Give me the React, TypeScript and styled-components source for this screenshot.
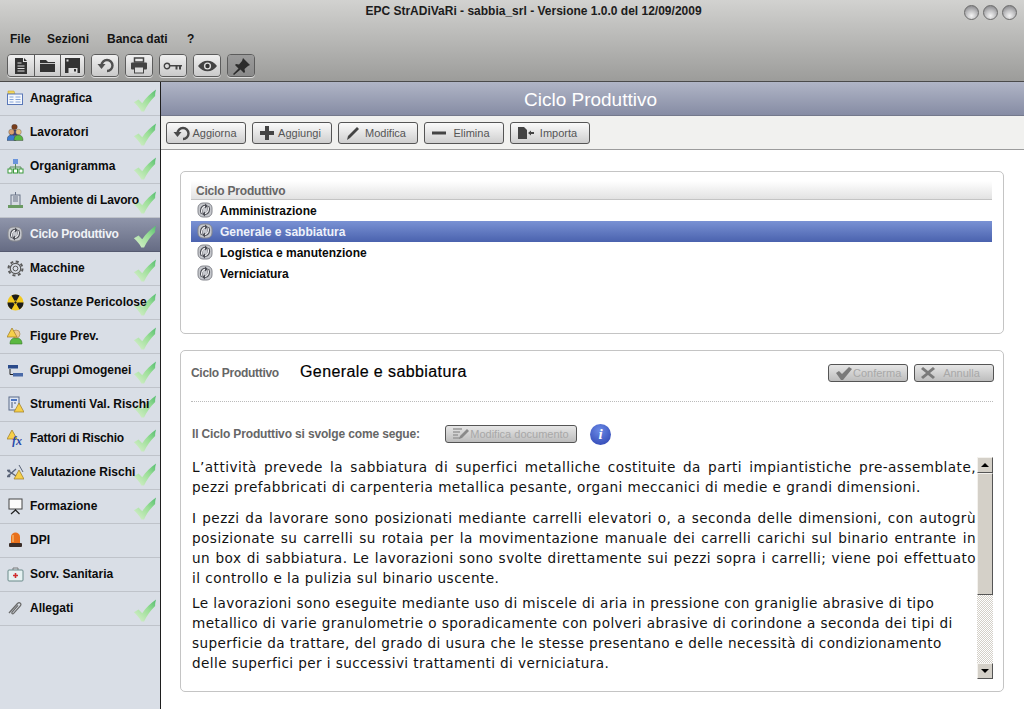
import React from "react";
import styled, { createGlobalStyle } from "styled-components";

const Global = createGlobalStyle`
  html, body {
    margin: 0;
    padding: 0;
    background: #fff;
    overflow: hidden;
  }
  * { box-sizing: border-box; }
`;

const Window = styled.div`
  width: 1024px;
  height: 709px;
  display: flex;
  flex-direction: column;
  overflow: hidden;
  font-family: "Liberation Sans", Arial, sans-serif;
`;

const TopBar = styled.header`
  height: 82px;
  flex: none;
  display: flex;
  flex-direction: column;
  background: linear-gradient(#d2d2d0, #9c9c9a);
  border-bottom: 1px solid #4a4a4a;
`;

const TitleRow = styled.div`
  height: 29px;
  flex: none;
  display: grid;
  grid-template-columns: 1fr auto;
  padding: 3px 7px 0 103px;
`;

const Title = styled.div`
  text-align: center;
  padding-top: 1px;
  font-size: 12px;
  font-weight: bold;
  line-height: 15px;
  color: #1c1c1c;
`;

const WinButtons = styled.div`
  display: flex;
  gap: 4px;
  padding-top: 2px;
`;

const WinDot = styled.span`
  width: 15px;
  height: 15px;
  border-radius: 50%;
  border: 1px solid #6b6b6b;
  background: radial-gradient(circle at 50% 75%, #f4f4f4 0, #c0c0c2 45%, #77777a 100%);
`;

const MenuBar = styled.nav`
  height: 20px;
  flex: none;
  display: grid;
  grid-template-columns: 37px 60px 80px auto;
  padding-left: 10px;
  align-items: center;
`;

const MenuItem = styled.span`
  font-size: 12px;
  font-weight: bold;
  color: #141414;
`;

const ToolRow = styled.div`
  display: flex;
  gap: 6px;
  padding: 5px 0 0 7px;
`;

const ToolGroup = styled.div`
  display: flex;
  height: 23px;
  border: 1px solid #5c5c5c;
  border-radius: 4px;
  overflow: hidden;
  box-shadow: 0 1px 0 #ddd;
`;

const ToolCell = styled.div<{ $active?: boolean; $w: number }>`
  width: ${(p) => p.$w}px;
  display: flex;
  align-items: center;
  justify-content: center;
  background: ${(p) =>
    p.$active ? "linear-gradient(#9b9b9b, #8a8a8a)" : "linear-gradient(#f0f0f0, #cacaca)"};
  & + & {
    border-left: 1px solid #5c5c5c;
  }
`;

const Body = styled.div`
  flex: 1;
  min-height: 0;
  display: flex;
`;

const Sidebar = styled.aside`
  width: 161px;
  flex: none;
  background: #d9dee6;
  border-right: 1px solid #1e1e1e;
`;

const SideRow = styled.div<{ $active?: boolean }>`
  position: relative;
  height: 34px;
  display: flex;
  align-items: center;
  gap: 6px;
  padding: 0 0 1px 7px;
  font-size: 12px;
  font-weight: bold;
  white-space: nowrap;
  color: ${(p) => (p.$active ? "#f0f2f6" : "#0c0c0c")};
  background: ${(p) => (p.$active ? "linear-gradient(#8f95aa, #666c84)" : "transparent")};
  border-bottom: 1px solid ${(p) => (p.$active ? "#555a70" : "#bfc3ca")};
`;

const SideLabel = styled.span<{ $track: number }>`
  position: relative;
  z-index: 1;
  letter-spacing: ${(p) => p.$track}px;
`;

const CheckSlot = styled.span`
  position: absolute;
  right: 3px;
  top: 6px;
  width: 24px;
  height: 25px;
`;

const Main = styled.main`
  flex: 1;
  min-width: 0;
  display: flex;
  flex-direction: column;
`;

const PageHead = styled.div`
  height: 34px;
  flex: none;
  display: flex;
  align-items: center;
  justify-content: center;
  padding: 3px 4px 0 0;
  font-size: 19px;
  color: #fff;
  background: linear-gradient(#b0b5c6, #868ca4);
  border-bottom: 1px solid #74798c;
`;

const ActionBar = styled.div`
  height: 34px;
  flex: none;
  display: flex;
  gap: 6px;
  padding: 6px 0 0 5px;
  background: #f1f1ef;
  border-bottom: 1px solid #9c9c9c;
`;

const Btn = styled.div<{ $off?: boolean; $w?: number }>`
  width: ${(p) => p.$w ?? 80}px;
  height: ${(p) => (p.$off ? 18 : 22)}px;
  display: flex;
  align-items: center;
  padding: 0 7px 0 6px;
  border: 1px solid #555;
  border-radius: 3px;
  font-size: 11px;
  color: ${(p) => (p.$off ? "#a8a8a8" : "#555")};
  background: ${(p) =>
    p.$off ? "linear-gradient(#e6e6e6, #bdbdbd)" : "linear-gradient(#fafafa, #cfcfcf)"};
`;

const BtnText = styled.span`
  flex: 1;
  text-align: center;
  white-space: nowrap;
`;

const Content = styled.div`
  flex: 1;
  min-height: 0;
  display: flex;
  flex-direction: column;
  gap: 16px;
  padding: 21px 20px 0 19px;
`;

const Panel = styled.section<{ $h: number }>`
  height: ${(p) => p.$h}px;
  flex: none;
  background: #fff;
  border: 1px solid #c4c4c4;
  border-radius: 5px;
`;

const ListPanel = styled(Panel)`
  padding: 9px 11px 0 10px;
`;

const ListHead = styled.div`
  height: 19px;
  padding: 3px 0 0 5px;
  font-size: 12px;
  font-weight: bold;
  letter-spacing: -0.2px;
  color: #666;
  background: linear-gradient(#fff, #e2e2e2);
  border-bottom: 1px solid #c4c4c4;
`;

const ListRow = styled.div<{ $active?: boolean }>`
  height: 21px;
  display: flex;
  align-items: center;
  gap: 7px;
  padding-left: 6px;
  font-size: 12px;
  font-weight: bold;
  color: ${(p) => (p.$active ? "#eef1fa" : "#0a0a0a")};
  background: ${(p) => (p.$active ? "linear-gradient(#7a92d4, #4a62ae)" : "transparent")};
`;

const DetailPanel = styled(Panel)`
  padding: 13px 10px 0 10px;
`;

const DetailHead = styled.div`
  height: 38px;
  display: flex;
  align-items: flex-start;
  border-bottom: 1px dotted #bbb;
`;

const DetailLabel = styled.span`
  width: 109px;
  padding-top: 2px;
  font-size: 12px;
  font-weight: bold;
  letter-spacing: -0.3px;
  color: #666;
`;

const DetailName = styled.span`
  flex: 1;
  margin-top: -1px;
  font-size: 16px;
  letter-spacing: 0.4px;
  -webkit-text-stroke: 0.2px #000;
  color: #000;
`;

const DetailButtons = styled.div`
  display: flex;
  gap: 6px;
  margin-right: -1px;
`;

const DocBar = styled.div`
  height: 55px;
  display: flex;
  align-items: flex-start;
  padding: 23px 0 0 1px;
`;

const DocLabel = styled.span`
  width: 253px;
  padding-top: 2px;
  font-size: 12px;
  font-weight: bold;
  letter-spacing: -0.15px;
  color: #666;
`;

const InfoDot = styled.span`
  width: 21px;
  height: 21px;
  margin: -1px 0 0 13px;
  border-radius: 50%;
  display: flex;
  align-items: center;
  justify-content: center;
  font: italic bold 15px "Liberation Serif", serif;
  color: #fff;
  background: radial-gradient(circle at 45% 30%, #6a8ae6, #2a3fae);
`;

const DocArea = styled.div`
  height: 222px;
  display: flex;
`;

const DocText = styled.div`
  flex: 1;
  min-width: 0;
  padding: 0 1px 0 1px;
  font-family: "DejaVu Sans", Verdana, sans-serif;
  font-size: 13.6px;
  letter-spacing: 0.46px;
  line-height: 20px;
  color: #111;
`;

const Para = styled.p<{ $gap: number; $left?: boolean }>`
  margin: 0 0 ${(p) => p.$gap}px;
  text-align: ${(p) => (p.$left ? "left" : "justify")};
  ${(p) => (p.$left ? "letter-spacing: 0.41px;" : "")}
`;

const ScrollBar = styled.div`
  width: 16px;
  flex: none;
  display: flex;
  flex-direction: column;
  background: repeating-conic-gradient(#d4d0c8 0 25%, #fff 0 50%) 0 0 / 2px 2px;
`;

const ScrollBtn = styled.div`
  height: 16px;
  flex: none;
  display: flex;
  align-items: center;
  justify-content: center;
  background: #d4d0c8;
  border: 1px solid;
  border-color: #f4f2ee #555 #555 #f4f2ee;
`;

const ScrollThumb = styled.div`
  height: 122px;
  flex: none;
  background: #d4d0c8;
  border: 1px solid;
  border-color: #f4f2ee #555 #555 #f4f2ee;
`;

const ScrollSpace = styled.div`
  flex: 1;
`;

const Arrow = styled.span<{ $down?: boolean }>`
  width: 0;
  height: 0;
  border-left: 4px solid transparent;
  border-right: 4px solid transparent;
  ${(p) => (p.$down ? "border-top: 4px solid #000;" : "border-bottom: 4px solid #000;")}
`;

const Fx = styled.text`
  font: italic bold 12px "Liberation Serif", serif;
  fill: #2a4aa8;
`;

/* ---- icons ---- */

const Cycle = () => (
  <svg width="16" height="16" viewBox="0 0 16 16" style={{ flex: "none", marginTop: -2 }}>
    <rect x="1" y="1" width="14" height="14" rx="5" fill="#c6c8cd" stroke="#85878e" />
    <g fill="none">
      <path d="M5 11.500C3 8 5 4.200 8 4" stroke="#4c4e55" strokeWidth="2.600" />
      <path d="M11 4.500C13 8 11 11.800 8 12" stroke="#4c4e55" strokeWidth="2.600" />
      <path d="M5 11C3.700 8 5.500 4.800 8 4.400" stroke="#f6f6f8" strokeWidth="1.200" />
      <path d="M11 5C12.300 8 10.500 11.200 8 11.600" stroke="#f6f6f8" strokeWidth="1.200" />
    </g>
    <path d="M8 1.500l3 2.500-3 2.500zM8 14.500L5 12l3-2.500z" fill="#4c4e55" />
  </svg>
);

const Check = () => (
  <CheckSlot>
    <svg width="24" height="25" viewBox="0 0 26 26">
      <defs>
        <linearGradient id="ck" x1="0" y1="1" x2="1" y2="0">
          <stop offset="0" stopColor="#dcf0d0" />
          <stop offset="0.6" stopColor="#9ade96" />
          <stop offset="1" stopColor="#52bc6e" />
        </linearGradient>
      </defs>
      <path d="M1 15l5-3 4 4C14 10 19 5 25 1c-1 3-1 5-1 7-5 5-9 10-12 17h-3C7 21 4 18 1 15z" fill="url(#ck)" />
    </svg>
  </CheckSlot>
);

const Warn = ({ x = 0, y = 0 }: { x?: number; y?: number }) => (
  <path
    transform={`translate(${x} ${y})`}
    d="M5 0l5 9H0z"
    fill="#f6d04a"
    stroke="#9c7a24"
    strokeWidth="0.7"
  />
);

const Person = ({ x, y, c, h }: { x: number; y: number; c: string; h: string }) => (
  <g transform={`translate(${x} ${y})`}>
    <path d="M0 11.500c0-4 2-5.500 4.500-5.500S9 7.500 9 11.500z" fill={c} stroke="#333" strokeWidth="0.4" />
    <circle cx="4.500" cy="3" r="2.800" fill={h} stroke="#333" strokeWidth="0.3" />
  </g>
);

const sideIcons: Record<string, React.ReactNode> = {
  Anagrafica: (
    <>
      <path d="M1 1h6l1 3H1z" fill="#f2d65a" stroke="#b89a30" strokeWidth="0.5" />
      <rect x="0.500" y="4" width="15" height="10.500" fill="#f4f7fc" stroke="#5a78b8" />
      <path d="M2.500 7h4M2.500 9.500h4M2.500 12h4M8.500 7h5M8.500 9.500h5M8.500 12h5" stroke="#6a90d0" strokeWidth="0.8" />
    </>
  ),
  Lavoratori: (
    <>
      <Person x={3} y={0} c="#3c3c7a" h="#7a3e1c" />
      <Person x={0} y={5} c="#3a7ad0" h="#d8a070" />
      <Person x={7} y={5} c="#5ab840" h="#e6c080" />
    </>
  ),
  Organigramma: (
    <>
      <rect x="6" y="1" width="5" height="5" fill="#6a94dc" />
      <path d="M8.500 6v3M3 11V9h11v2M8.500 9v2" fill="none" stroke="#5a8a5a" />
      <rect x="1" y="11" width="4" height="4" fill="#fff" stroke="#3a9a3a" />
      <rect x="6.500" y="11" width="4" height="4" fill="#fff" stroke="#3a9a3a" />
      <rect x="12" y="11" width="4" height="4" fill="#fff" stroke="#3a9a3a" />
    </>
  ),
  "Ambiente di Lavoro": (
    <>
      <rect x="4" y="3" width="9" height="11" fill="#d6dae2" stroke="#6a7488" />
      <path d="M6 5h5M6 7h5M6 9h5M8.500 0v3" stroke="#6a7488" />
      <rect x="1" y="13" width="15" height="3" fill="#6a9a62" />
    </>
  ),
  "Ciclo Produttivo": <Cycle />,
  Macchine: (
    <>
      <circle cx="8.500" cy="8.500" r="5.200" fill="none" stroke="#5a5a5a" strokeWidth="1.200" />
      <circle cx="8.500" cy="8.500" r="7" fill="none" stroke="#5a5a5a" strokeWidth="2" strokeDasharray="3 2.500" />
      <circle cx="8.500" cy="8.500" r="2.400" fill="none" stroke="#5a5a5a" />
    </>
  ),
  "Sostanze Pericolose": (
    <>
      <circle cx="8.500" cy="8.500" r="8" fill="#f2c81e" />
      <path d="M8.500 8.500L4.500 1.600a8 8 0 0 1 8 0zM8.500 8.500L16.500 8.500a8 8 0 0 1-4 6.900zM8.500 8.500L4.500 15.400a8 8 0 0 1-4-6.900z" fill="#1c1c1c" />
      <circle cx="8.500" cy="8.500" r="1.600" fill="#1c1c1c" stroke="#f2c81e" />
    </>
  ),
  "Figure Prev.": (
    <>
      <path d="M3 16c0-5 3-6 6-6s6 1 6 6z" fill="#5ab840" stroke="#3a7a2a" strokeWidth="0.6" />
      <circle cx="9" cy="6" r="4" fill="#f0c890" stroke="#a07a40" strokeWidth="0.6" />
      <Warn x={0} y={0} />
    </>
  ),
  "Gruppi Omogenei": (
    <>
      <rect x="1" y="3" width="10" height="3.500" fill="#2a4a8a" />
      <rect x="6" y="11" width="10" height="3.500" fill="#4a6aa8" />
      <path d="M3 7v5.500h3" fill="none" stroke="#222" />
    </>
  ),
  "Strumenti Val. Rischi": (
    <>
      <rect x="2" y="1" width="10" height="13" fill="#dfe6f2" stroke="#5a6a88" />
      <rect x="4" y="3" width="6" height="2" fill="#4a74c0" />
      <path d="M4 7h2M7 7h2M4 9h2M4 11h2" stroke="#4a5a78" />
      <Warn x={7} y={7} />
    </>
  ),
  "Fattori di Rischio": (
    <>
      <Warn x={0} y={0} />
      <Fx x="5" y="15">fx</Fx>
    </>
  ),
  "Valutazione Rischi": (
    <>
      <path d="M0 6l9 6M0 13l9-8" stroke="#5a6478" strokeWidth="1.400" />
      <circle cx="2" cy="7" r="1.400" fill="#5a6478" />
      <circle cx="2" cy="12" r="1.400" fill="#5a6478" />
      <path d="M12 1l4 7" stroke="#5a6478" />
      <Warn x={7} y={6} />
    </>
  ),
  Formazione: (
    <>
      <rect x="2" y="1" width="13" height="10" fill="#fbfbfb" stroke="#444" />
      <path d="M8.500 11v1M8.500 12L4 16M8.500 12l4 4" stroke="#222" strokeWidth="1.200" />
    </>
  ),
  DPI: (
    <>
      <path d="M4 11V5c0-6 9-6 9 0v6z" fill="#e8701c" />
      <path d="M6 3v7" stroke="#f8b060" strokeWidth="1.500" />
      <rect x="2" y="11" width="13" height="4" rx="1" fill="#3a2c28" />
    </>
  ),
  "Sorv. Sanitaria": (
    <>
      <path d="M6 4V2h5v2" fill="none" stroke="#7a7a7a" />
      <rect x="1" y="4" width="15" height="11" rx="1" fill="#e6f2f2" stroke="#6a8a8a" />
      <path d="M8.500 7v5M6 9.500h5" stroke="#d03030" strokeWidth="1.600" />
    </>
  ),
  Allegati: (
    <path
      d="M2 13l8.500-9.500c2-2 4.600 .4 2.800 2.400L6.600 13.400c-1 1-2.400-.2-1.500-1.300L11 5.400"
      fill="none"
      stroke="#6a6a6a"
      strokeWidth="1.300"
    />
  ),
};

const sideItems: { name: string; done: boolean; track?: number }[] = [
  { name: "Anagrafica", done: true },
  { name: "Lavoratori", done: true },
  { name: "Organigramma", done: true },
  { name: "Ambiente di Lavoro", done: true, track: -0.17 },
  { name: "Ciclo Produttivo", done: true, track: -0.25 },
  { name: "Macchine", done: true },
  { name: "Sostanze Pericolose", done: true },
  { name: "Figure Prev.", done: true },
  { name: "Gruppi Omogenei", done: true },
  { name: "Strumenti Val. Rischi", done: true },
  { name: "Fattori di Rischio", done: true, track: -0.23 },
  { name: "Valutazione Rischi", done: true },
  { name: "Formazione", done: true },
  { name: "DPI", done: false },
  { name: "Sorv. Sanitaria", done: false },
  { name: "Allegati", done: true },
];

const Ico = ({ w = 18, h = 16, children }: { w?: number; h?: number; children: React.ReactNode }) => (
  <svg width={w} height={h} viewBox={`0 0 ${w} ${h}`} style={{ flex: "none" }}>
    {children}
  </svg>
);

const UndoShape = ({ c }: { c: string }) => (
  <>
    <path d="M4.500 8.500a5.500 5.500 0 1 1 5.500 5.500" fill="none" stroke={c} strokeWidth="2.400" />
    <path d="M0.500 7h8l-4 5z" fill={c} />
  </>
);

const toolIcons = {
  doc: (
    <Ico w={14} h={18}>
      <path d="M1 1h8v4h4v12H1z" fill="#333" />
      <path d="M10 1l3 3h-3z" fill="#333" />
      <path d="M3.500 6h4M3.500 9h7M3.500 11.500h7M3.500 14h7" stroke="#ddd" />
    </Ico>
  ),
  folder: (
    <Ico w={17} h={14}>
      <path d="M1 1h6l2 2h7v10H1z" fill="#333" />
      <path d="M1 4.500h15" stroke="#c4c4c4" />
    </Ico>
  ),
  save: (
    <Ico w={17} h={17}>
      <path d="M1 1h15v15H1z" fill="#333" />
      <rect x="2.500" y="2.500" width="2" height="2" fill="#ddd" />
      <rect x="4.500" y="11" width="9" height="5" fill="#ddd" />
      <rect x="10" y="12" width="2" height="2.500" fill="#333" />
    </Ico>
  ),
  undo: (
    <Ico w={17} h={17}>
      <UndoShape c="#505050" />
    </Ico>
  ),
  print: (
    <Ico w={18} h={17}>
      <path d="M4.500 1h9v4h-9z" fill="none" stroke="#444" strokeWidth="1.500" />
      <rect x="1" y="5.500" width="16" height="7" rx="1" fill="#444" />
      <rect x="4.500" y="10" width="9" height="6" fill="#ddd" stroke="#444" />
    </Ico>
  ),
  key: (
    <Ico w={20} h={10}>
      <circle cx="4" cy="5" r="2.700" fill="none" stroke="#444" strokeWidth="1.400" />
      <path d="M7 4h12v1.500h-1v3h-2v-3h-1.500v3h-2v-3H7z" fill="#444" />
    </Ico>
  ),
  eye: (
    <Ico w={21} h={12}>
      <path d="M1 6c5-7 14-7 19 0-5 7-14 7-19 0z" fill="#444" />
      <circle cx="10.500" cy="6" r="3.600" fill="#ddd" />
      <circle cx="10.500" cy="6" r="2.200" fill="#333" />
    </Ico>
  ),
  pin: (
    <Ico w={19} h={18}>
      <path d="M11 1l7 7-2 1-3.500 3 .5 3-1 1-3.500-3.500L2 18l-1-1 5.500-5.500L3 8l1-1 3 .5 3-3.500z" fill="#2c2c2c" />
    </Ico>
  ),
};

const actions: { label: string; icon: React.ReactNode }[] = [
  {
    label: "Aggiorna",
    icon: (
      <Ico w={18} h={16}>
        <UndoShape c="#4a4a4a" />
      </Ico>
    ),
  },
  {
    label: "Aggiungi",
    icon: (
      <Ico w={16} h={16}>
        <path d="M6 1h4v5h5v4h-5v5H6v-5H1V6h5z" fill="#444" />
      </Ico>
    ),
  },
  {
    label: "Modifica",
    icon: (
      <Ico w={16} h={16}>
        <path d="M2 15l1-4L12 2l2 2-9 9z" fill="#444" />
      </Ico>
    ),
  },
  {
    label: "Elimina",
    icon: (
      <Ico w={16} h={16}>
        <rect x="1" y="6.500" width="14" height="3" fill="#444" />
      </Ico>
    ),
  },
  {
    label: "Importa",
    icon: (
      <Ico w={18} h={16}>
        <path d="M1 2h6l3 3v9H1z" fill="#444" />
        <path d="M11 8l3-2.500v1.500h3v2h-3v1.500z" fill="#444" />
      </Ico>
    ),
  },
];

const listItems = ["Amministrazione", "Generale e sabbiatura", "Logistica e manutenzione", "Verniciatura"];

export default function App() {
  return (
    <Window>
      <Global />
      <TopBar>
        <TitleRow>
          <Title>EPC StrADiVaRi - sabbia_srl - Versione 1.0.0 del 12/09/2009</Title>
          <WinButtons>
            <WinDot />
            <WinDot />
            <WinDot />
          </WinButtons>
        </TitleRow>
        <MenuBar>
          <MenuItem>File</MenuItem>
          <MenuItem>Sezioni</MenuItem>
          <MenuItem>Banca dati</MenuItem>
          <MenuItem>?</MenuItem>
        </MenuBar>
        <ToolRow>
          <ToolGroup>
            <ToolCell $w={26}>{toolIcons.doc}</ToolCell>
            <ToolCell $w={26}>{toolIcons.folder}</ToolCell>
            <ToolCell $w={24}>{toolIcons.save}</ToolCell>
          </ToolGroup>
          <ToolGroup>
            <ToolCell $w={26}>{toolIcons.undo}</ToolCell>
          </ToolGroup>
          <ToolGroup>
            <ToolCell $w={26}>{toolIcons.print}</ToolCell>
          </ToolGroup>
          <ToolGroup>
            <ToolCell $w={26}>{toolIcons.key}</ToolCell>
          </ToolGroup>
          <ToolGroup>
            <ToolCell $w={26}>{toolIcons.eye}</ToolCell>
          </ToolGroup>
          <ToolGroup>
            <ToolCell $w={26} $active>
              {toolIcons.pin}
            </ToolCell>
          </ToolGroup>
        </ToolRow>
      </TopBar>
      <Body>
        <Sidebar>
          {sideItems.map((it) => (
            <SideRow key={it.name} $active={it.name === "Ciclo Produttivo"}>
              <Ico w={17} h={17}>
                {sideIcons[it.name]}
              </Ico>
              <SideLabel $track={it.track ?? 0}>{it.name}</SideLabel>
              {it.done && <Check />}
            </SideRow>
          ))}
        </Sidebar>
        <Main>
          <PageHead>Ciclo Produttivo</PageHead>
          <ActionBar>
            {actions.map((a) => (
              <Btn key={a.label}>
                {a.icon}
                <BtnText>{a.label}</BtnText>
              </Btn>
            ))}
          </ActionBar>
          <Content>
            <ListPanel $h={163}>
              <ListHead>Ciclo Produttivo</ListHead>
              {listItems.map((name) => (
                <ListRow key={name} $active={name === "Generale e sabbiatura"}>
                  <Cycle />
                  {name}
                </ListRow>
              ))}
            </ListPanel>
            <DetailPanel $h={342}>
              <DetailHead>
                <DetailLabel>Ciclo Produttivo</DetailLabel>
                <DetailName>Generale e sabbiatura</DetailName>
                <DetailButtons>
                  <Btn $off>
                    <Ico w={18} h={14}>
                      <path d="M1 7l3-2 3 3 7-7 3 2-9 11h-2z" fill="#7a7a7a" />
                    </Ico>
                    <BtnText>Conferma</BtnText>
                  </Btn>
                  <Btn $off>
                    <Ico w={16} h={14}>
                      <path d="M2 1l5 4 5-4 2 2-5 4 5 4-2 2-5-4-5 4-2-2 5-4-5-4z" fill="#7a7a7a" />
                    </Ico>
                    <BtnText>Annulla</BtnText>
                  </Btn>
                </DetailButtons>
              </DetailHead>
              <DocBar>
                <DocLabel>Il Ciclo Produttivo si svolge come segue:</DocLabel>
                <Btn $off $w={132}>
                  <Ico w={18} h={14}>
                    <path d="M1 2h9M1 5h7M1 8h5M1 11h7" stroke="#999" strokeWidth="1.400" />
                    <path d="M7 12l1-3 7-7 2 2-7 7z" fill="#8a8a8a" />
                  </Ico>
                  <BtnText>Modifica documento</BtnText>
                </Btn>
                <InfoDot>i</InfoDot>
              </DocBar>
              <DocArea>
                <DocText>
                  <Para $gap={11}>
                    L’attività prevede la sabbiatura di superfici metalliche costituite da parti impiantistiche
                    pre-assemblate, pezzi prefabbricati di carpenteria metallica pesante, organi meccanici di medie e
                    grandi dimensioni.
                  </Para>
                  <Para $gap={5}>
                    I pezzi da lavorare sono posizionati mediante carrelli elevatori o, a seconda delle dimensioni, con
                    autogrù posizionate su carrelli su rotaia per la movimentazione manuale dei carrelli carichi sul
                    binario entrante in un box di sabbiatura. Le lavorazioni sono svolte direttamente sui pezzi sopra i
                    carrelli; viene poi effettuato il&nbsp;controllo e la pulizia sul binario uscente.
                  </Para>
                  <Para $gap={0} $left>
                    Le lavorazioni sono eseguite mediante uso di miscele di aria in pressione con graniglie abrasive di
                    tipo metallico di varie granulometrie o sporadicamente con polveri abrasive di corindone a seconda
                    dei tipi di superficie da trattare, del grado di usura che le stesse presentano e delle necessità di
                    condizionamento delle superfici per i successivi trattamenti di verniciatura.
                  </Para>
                </DocText>
                <ScrollBar>
                  <ScrollBtn>
                    <Arrow />
                  </ScrollBtn>
                  <ScrollThumb />
                  <ScrollSpace />
                  <ScrollBtn>
                    <Arrow $down />
                  </ScrollBtn>
                </ScrollBar>
              </DocArea>
            </DetailPanel>
          </Content>
        </Main>
      </Body>
    </Window>
  );
}
